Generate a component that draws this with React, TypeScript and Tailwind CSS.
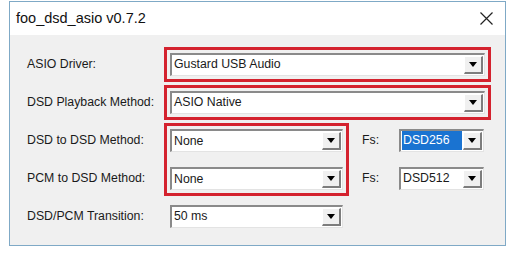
import React from "react";

const font = { fontFamily: '"Liberation Sans", Arial, sans-serif' };

function Arrow() {
  return (
    <svg width="8" height="5" viewBox="0 0 8 5">
      <path d="M0 0 H8 L4 5 Z" fill="#000" />
    </svg>
  );
}

function Combo({
  value,
  width,
  selected,
}: {
  value: string;
  width: string;
  selected?: boolean;
}) {
  return (
    <div
      className={`${width} h-[23px] flex items-stretch bg-white border-t-2 border-l-2 border-t-[#8a8a8a] border-l-[#8a8a8a] border-b border-r border-b-[#e3e3e3] border-r-[#e3e3e3]`}
    >
      <div className="flex-1 flex items-center px-[1px] min-w-0">
        <span
          className={`text-[12.3px] leading-[19px] px-[1px] ${
            selected ? "bg-[#1a73d1] text-white w-full" : "text-[#1a1a1a]"
          }`}
        >
          {value}
        </span>
      </div>
      <div className="w-[19px] my-[1px] mr-[1px] flex items-center justify-center bg-[#f0f0f0] border-t border-l border-t-white border-l-white border-b-2 border-r-2 border-b-[#7d7d7d] border-r-[#7d7d7d]">
        <Arrow />
      </div>
    </div>
  );
}

function Label({ children }: { children: React.ReactNode }) {
  return (
    <div className="w-[143px] h-[38px] flex items-center text-[12.3px] text-[#1a1a1a]">
      {children}
    </div>
  );
}

export default function App() {
  return (
    <div className="w-[525px] h-[262px] bg-white pt-[1px]" style={font}>
      <div className="ml-[9px] w-[497px] h-[245px] border border-[#7fa9c6] flex flex-col">
        {/* Title bar */}
        <div className="h-[33px] bg-white flex items-center justify-between pl-[6px] pr-[12px]">
          <span className="text-[14.5px] text-[#111]">foo_dsd_asio v0.7.2</span>
          <svg width="13" height="13" viewBox="0 0 13 13">
            <path d="M0.5 0.5 L12.5 12.5 M12.5 0.5 L0.5 12.5" stroke="#222" strokeWidth="1.2" />
          </svg>
        </div>

        {/* Client */}
        <div className="flex-1 bg-[#f0f0f0] pl-[17px] pt-[10px]">
          <div className="flex items-center">
            <Label>ASIO Driver:</Label>
            <div className="outline-[3px] outline-solid outline-[#d4222e] outline-offset-[3px]">
              <Combo value="Gustard USB Audio" width="w-[315px]" />
            </div>
          </div>
          <div className="flex items-center">
            <Label>DSD Playback Method:</Label>
            <div className="outline-[3px] outline-solid outline-[#d4222e] outline-offset-[3px]">
              <Combo value="ASIO Native" width="w-[315px]" />
            </div>
          </div>

          <div className="flex">
            <div className="flex flex-col">
              <Label>DSD to DSD Method:</Label>
              <Label>PCM to DSD Method:</Label>
            </div>
            <div className="self-start mt-[8px] flex flex-col gap-[15px] outline-[3px] outline-solid outline-[#d4222e] outline-offset-[3px]">
              <Combo value="None" width="w-[173px]" />
              <Combo value="None" width="w-[173px]" />
            </div>
            <div className="flex flex-col ml-[19px]">
              <div className="h-[38px] flex items-center">
                <span className="w-[37px] text-[12.3px] text-[#1a1a1a]">Fs:</span>
                <Combo value="DSD256" width="w-[85px]" selected />
              </div>
              <div className="h-[38px] flex items-center">
                <span className="w-[37px] text-[12.3px] text-[#1a1a1a]">Fs:</span>
                <Combo value="DSD512" width="w-[85px]" />
              </div>
            </div>
          </div>

          <div className="flex items-center">
            <Label>DSD/PCM Transition:</Label>
            <Combo value="50 ms" width="w-[173px]" />
          </div>
        </div>
      </div>
    </div>
  );
}
